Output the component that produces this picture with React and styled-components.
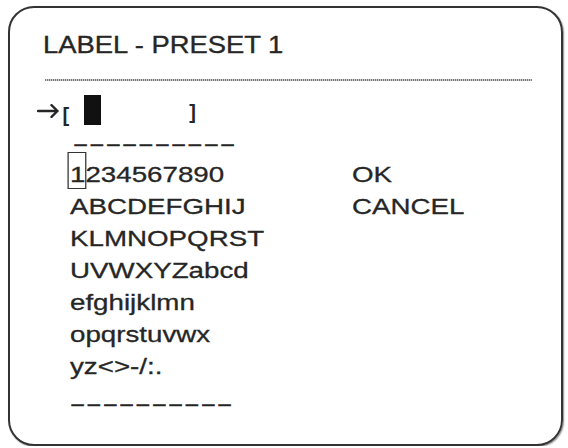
import React from "react";
import styled, { createGlobalStyle } from "styled-components";

const Global = createGlobalStyle`
  html, body { margin: 0; padding: 0; background: #ffffff; }
  body { font-family: "Liberation Sans", Arial, sans-serif; color: #262626; }
`;

const Frame = styled.div`
  box-sizing: border-box;
  margin: 6px 0 0 8px;
  width: 555px;
  height: 440px;
  border: 2.5px solid #333333;
  border-radius: 26px;
  box-shadow: 1px 1px 1.5px rgba(0, 0, 0, 0.45);
  display: flex;
  flex-direction: column;
  align-items: flex-start;
`;

const Title = styled.div`
  margin: 23px 0 0 32.5px;
  font-size: 24px;
  line-height: 28px;
  white-space: nowrap;
  transform: scaleX(1.14);
  transform-origin: left center;
  -webkit-text-stroke: 0.35px #262626;
`;

const DottedRule = styled.div`
  margin: 19.5px 0 0 34.5px;
  width: 487px;
  height: 2px;
  background: repeating-linear-gradient(
    to right,
    #7a7a7a 0 1px,
    #c8c8c8 1px 2px
  );
`;

const InputRow = styled.div`
  margin: 13px 0 0 26.5px;
  height: 32px;
  display: flex;
  align-items: center;
`;

const ArrowIcon = styled.svg`
  display: block;
  position: relative;
  top: 1px;
`;

const Bracket = styled.span`
  font-size: 20px;
  font-weight: bold;
  line-height: 20px;
  margin-left: ${(p) => p.$gap}px;
  position: relative;
  top: ${(p) => p.$drop}px;
`;

const Cursor = styled.span`
  display: block;
  width: 17px;
  height: 30px;
  background: #111111;
  margin-left: 15px;
`;

const Dashes = styled.div`
  margin: ${(p) => p.$top}px 0 0 ${(p) => p.$left}px;
  font-size: 22px;
  line-height: 20px;
  letter-spacing: 4.1px;
  white-space: nowrap;
  -webkit-text-stroke: 0.5px #262626;
`;

const Board = styled.div`
  margin: 5px 0 0 59.5px;
  display: grid;
  grid-template-columns: 282px auto;
  align-items: start;
`;

const Column = styled.div`
  display: flex;
  flex-direction: column;
  align-items: flex-start;
`;

const Line = styled.div`
  font-size: 22px;
  line-height: 32px;
  white-space: nowrap;
  transform: scaleX(1.26);
  transform-origin: left center;
  -webkit-text-stroke: 0.3px #262626;
`;

const Picked = styled.span`
  position: relative;
  &::after {
    content: "";
    position: absolute;
    left: -2.5px;
    right: -1px;
    top: -10px;
    bottom: -2px;
    border: 1.5px solid #333333;
  }
`;

const rows = [
  "ABCDEFGHIJ",
  "KLMNOPQRST",
  "UVWXYZabcd",
  "efghijklmn",
  "opqrstuvwx",
  "yz<>-/:.",
];

function Arrow() {
  return (
    <ArrowIcon width="22" height="14" viewBox="0 0 22 14" aria-hidden="true">
      <path
        d="M1 7 H20.5 M14.5 1.2 L20.5 7 L14.5 12.8"
        fill="none"
        stroke="#262626"
        strokeWidth="2.4"
        strokeLinecap="round"
        strokeLinejoin="round"
      />
    </ArrowIcon>
  );
}

export default function App() {
  return (
    <>
      <Global />
      <Frame>
        <Title>LABEL - PRESET 1</Title>
        <DottedRule />
        <InputRow>
          <Arrow />
          <Bracket $gap={4} $drop={5}>[</Bracket>
          <Cursor />
          <Bracket $gap={88} $drop={2}>]</Bracket>
        </InputRow>
        <Dashes $top={8} $left={64.5}>––––––––––</Dashes>
        <Board>
          <Column>
            <Line>
              <Picked>1</Picked>234567890
            </Line>
            {rows.map((r) => (
              <Line key={r}>{r}</Line>
            ))}
            <Dashes $top={11} $left={2}>––––––––––</Dashes>
          </Column>
          <Column>
            <Line>OK</Line>
            <Line>CANCEL</Line>
          </Column>
        </Board>
      </Frame>
    </>
  );
}
